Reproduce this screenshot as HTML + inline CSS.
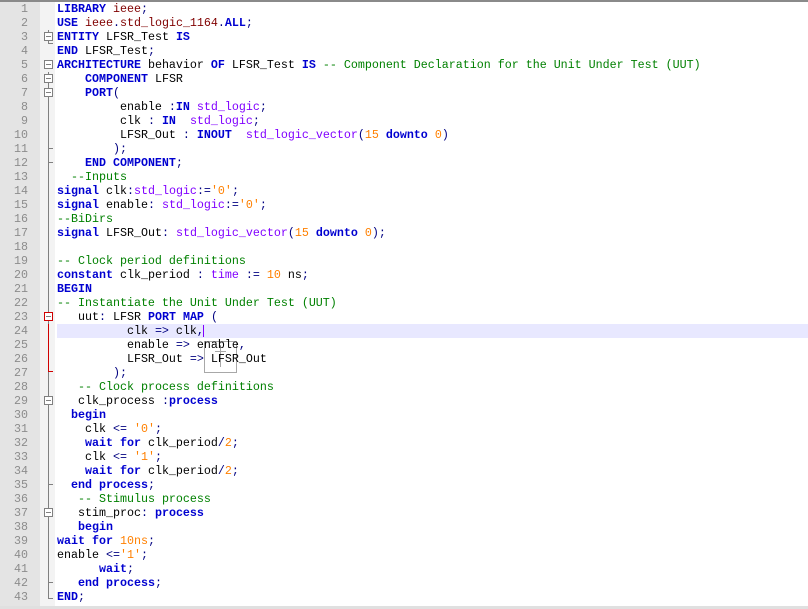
<!DOCTYPE html>
<html><head><meta charset="utf-8"><style>
body{margin:0;width:808px;height:609px;overflow:hidden;background:#fff;position:relative;font-family:"Liberation Mono",monospace;font-size:11.67px;}
#top{position:absolute;left:0;top:0;width:808px;height:2px;background:#8a8a8a}
#ln{position:absolute;left:0;top:2px;width:40px;height:605px;background:#e4e4e4}
#fm{position:absolute;left:40px;top:2px;width:15px;height:605px;background:#f3f3f3}
#bot{position:absolute;left:0;top:606px;width:808px;height:3px;background:#e0e0e0}
.n{position:absolute;left:0;width:28px;text-align:right;color:#8c8c8c;height:14px;line-height:14px}
.l{position:absolute;left:57px;white-space:pre;height:14px;line-height:14px;color:#000}
.k{color:#0000d0;font-weight:bold}
.b{color:#800000}
.t{color:#8000ff}
.o{color:#000080}
.c{color:#008000}
.d{color:#ff8000}
.box{position:absolute;left:44px;width:7px;height:7px;border:1px solid #808080;background:#fff}
.box:after{content:"";position:absolute;left:1px;top:3px;width:5px;height:1px;background:#808080}
.vl{position:absolute;left:48px;width:1px;background:#808080}
.tk{position:absolute;left:48px;height:1px;width:5px;background:#808080}
</style></head><body>
<div id="top"></div><div id="ln"></div><div id="fm"></div>
<div style="position:absolute;left:57px;top:324px;width:751px;height:14px;background:#e8e8ff"></div>
<div style="position:absolute;left:203px;top:325px;width:1px;height:12px;background:#8000ff"></div>
<div style="position:absolute;left:204px;top:341px;width:31px;height:30px;border:1px solid #a8a8a8"></div>
<div style="position:absolute;left:220px;top:345px;width:1px;height:22px;background:#a8a8a8"></div>
<div style="position:absolute;left:215px;top:351px;width:11px;height:1px;background:#a8a8a8"></div>

<!-- fold lines -->
<div class="vl" style="top:30px;height:13px"></div><div class="tk" style="top:43px"></div>
<div class="vl" style="top:72px;height:527px"></div><div class="tk" style="top:598px"></div>
<div class="tk" style="top:148px"></div><div class="tk" style="top:162px"></div>
<div class="vl" style="top:324px;height:47px;background:#d00000"></div><div class="tk" style="top:371px;background:#d00000"></div>
<div class="tk" style="top:484px"></div><div class="tk" style="top:582px"></div>
<div class="box" style="top:32px"></div>
<div class="box" style="top:60px"></div>
<div class="box" style="top:74px"></div>
<div class="box" style="top:88px"></div>
<div class="box" style="top:312px;border-color:#d00000"></div>
<div class="box" style="top:396px"></div>
<div class="box" style="top:508px"></div>

<div id="bot"></div>

<div class="n" style="top:2px">1</div><div class="n" style="top:16px">2</div><div class="n" style="top:30px">3</div><div class="n" style="top:44px">4</div><div class="n" style="top:58px">5</div><div class="n" style="top:72px">6</div><div class="n" style="top:86px">7</div><div class="n" style="top:100px">8</div><div class="n" style="top:114px">9</div><div class="n" style="top:128px">10</div><div class="n" style="top:142px">11</div><div class="n" style="top:156px">12</div><div class="n" style="top:170px">13</div><div class="n" style="top:184px">14</div><div class="n" style="top:198px">15</div><div class="n" style="top:212px">16</div><div class="n" style="top:226px">17</div><div class="n" style="top:240px">18</div><div class="n" style="top:254px">19</div><div class="n" style="top:268px">20</div><div class="n" style="top:282px">21</div><div class="n" style="top:296px">22</div><div class="n" style="top:310px">23</div><div class="n" style="top:324px">24</div><div class="n" style="top:338px">25</div><div class="n" style="top:352px">26</div><div class="n" style="top:366px">27</div><div class="n" style="top:380px">28</div><div class="n" style="top:394px">29</div><div class="n" style="top:408px">30</div><div class="n" style="top:422px">31</div><div class="n" style="top:436px">32</div><div class="n" style="top:450px">33</div><div class="n" style="top:464px">34</div><div class="n" style="top:478px">35</div><div class="n" style="top:492px">36</div><div class="n" style="top:506px">37</div><div class="n" style="top:520px">38</div><div class="n" style="top:534px">39</div><div class="n" style="top:548px">40</div><div class="n" style="top:562px">41</div><div class="n" style="top:576px">42</div><div class="n" style="top:590px">43</div>

<div class="l" style="top:2px"><span class="k">LIBRARY</span> <span class="b">ieee</span><span class="o">;</span></div>
<div class="l" style="top:16px"><span class="k">USE</span> <span class="b">ieee</span><span class="o">.</span><span class="b">std_logic_1164</span><span class="o">.</span><span class="k">ALL</span><span class="o">;</span></div>
<div class="l" style="top:30px"><span class="k">ENTITY</span> LFSR_Test <span class="k">IS</span></div>
<div class="l" style="top:44px"><span class="k">END</span> LFSR_Test<span class="o">;</span></div>
<div class="l" style="top:58px"><span class="k">ARCHITECTURE</span> behavior <span class="k">OF</span> LFSR_Test <span class="k">IS</span> <span class="c">-- Component Declaration for the Unit Under Test (UUT)</span></div>
<div class="l" style="top:72px">    <span class="k">COMPONENT</span> LFSR</div>
<div class="l" style="top:86px">    <span class="k">PORT</span><span class="o">(</span></div>
<div class="l" style="top:100px">         enable <span class="o">:</span><span class="k">IN</span> <span class="t">std_logic</span><span class="o">;</span></div>
<div class="l" style="top:114px">         clk <span class="o">:</span> <span class="k">IN</span>  <span class="t">std_logic</span><span class="o">;</span></div>
<div class="l" style="top:128px">         LFSR_Out <span class="o">:</span> <span class="k">INOUT</span>  <span class="t">std_logic_vector</span><span class="o">(</span><span class="d">15</span> <span class="k">downto</span> <span class="d">0</span><span class="o">)</span></div>
<div class="l" style="top:142px">        <span class="o">);</span></div>
<div class="l" style="top:156px">    <span class="k">END COMPONENT</span><span class="o">;</span></div>
<div class="l" style="top:170px">  <span class="c">--Inputs</span></div>
<div class="l" style="top:184px"><span class="k">signal</span> clk<span class="o">:</span><span class="t">std_logic</span><span class="o">:=</span><span class="d">'0'</span><span class="o">;</span></div>
<div class="l" style="top:198px"><span class="k">signal</span> enable<span class="o">:</span> <span class="t">std_logic</span><span class="o">:=</span><span class="d">'0'</span><span class="o">;</span></div>
<div class="l" style="top:212px"><span class="c">--BiDirs</span></div>
<div class="l" style="top:226px"><span class="k">signal</span> LFSR_Out<span class="o">:</span> <span class="t">std_logic_vector</span><span class="o">(</span><span class="d">15</span> <span class="k">downto</span> <span class="d">0</span><span class="o">);</span></div>
<div class="l" style="top:254px"><span class="c">-- Clock period definitions</span></div>
<div class="l" style="top:268px"><span class="k">constant</span> clk_period <span class="o">:</span> <span class="t">time</span> <span class="o">:=</span> <span class="d">10</span> ns<span class="o">;</span></div>
<div class="l" style="top:282px"><span class="k">BEGIN</span></div>
<div class="l" style="top:296px"><span class="c">-- Instantiate the Unit Under Test (UUT)</span></div>
<div class="l" style="top:310px">   uut<span class="o">:</span> LFSR <span class="k">PORT MAP</span> <span class="o">(</span></div>
<div class="l" style="top:324px">          clk <span class="o">=&gt;</span> clk<span class="o">,</span></div>
<div class="l" style="top:338px">          enable <span class="o">=&gt;</span> enable<span class="o">,</span></div>
<div class="l" style="top:352px">          LFSR_Out <span class="o">=&gt;</span> LFSR_Out</div>
<div class="l" style="top:366px">        <span class="o">);</span></div>
<div class="l" style="top:380px">   <span class="c">-- Clock process definitions</span></div>
<div class="l" style="top:394px">   clk_process <span class="o">:</span><span class="k">process</span></div>
<div class="l" style="top:408px">  <span class="k">begin</span></div>
<div class="l" style="top:422px">    clk <span class="o">&lt;=</span> <span class="d">'0'</span><span class="o">;</span></div>
<div class="l" style="top:436px">    <span class="k">wait for</span> clk_period<span class="o">/</span><span class="d">2</span><span class="o">;</span></div>
<div class="l" style="top:450px">    clk <span class="o">&lt;=</span> <span class="d">'1'</span><span class="o">;</span></div>
<div class="l" style="top:464px">    <span class="k">wait for</span> clk_period<span class="o">/</span><span class="d">2</span><span class="o">;</span></div>
<div class="l" style="top:478px">  <span class="k">end process</span><span class="o">;</span></div>
<div class="l" style="top:492px">   <span class="c">-- Stimulus process</span></div>
<div class="l" style="top:506px">   stim_proc<span class="o">:</span> <span class="k">process</span></div>
<div class="l" style="top:520px">   <span class="k">begin</span></div>
<div class="l" style="top:534px"><span class="k">wait for</span> <span class="d">10ns</span><span class="o">;</span></div>
<div class="l" style="top:548px">enable <span class="o">&lt;=</span><span class="d">'1'</span><span class="o">;</span></div>
<div class="l" style="top:562px">      <span class="k">wait</span><span class="o">;</span></div>
<div class="l" style="top:576px">   <span class="k">end process</span><span class="o">;</span></div>
<div class="l" style="top:590px"><span class="k">END</span><span class="o">;</span></div>
</body></html>
